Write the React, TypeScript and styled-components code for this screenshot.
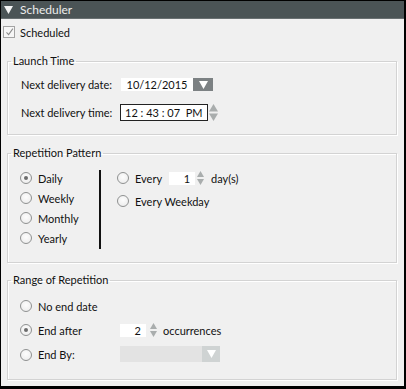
import { styled, createGlobalStyle } from "styled-components";

const GlobalStyle = createGlobalStyle`
    body {
        margin: 0;
        background: #000;
    }
`

const Radio = ({ checked }: { checked?: boolean }) => (
    <RadioCircle>{checked && <RadioDot />}</RadioCircle>
);

const Spinner = ({ size }: { size: "sm" | "lg" }) => {
    const w = size === "lg" ? 9 : 7;
    const h = size === "lg" ? 17 : 14;
    return (
        <svg width={w} height={h} viewBox={`0 0 ${w} ${h}`}>
            <polygon points={`0,${h / 2 - 1} ${w / 2},0 ${w},${h / 2 - 1}`} fill="#a9adad" />
            <polygon points={`0,${h / 2 + 1} ${w / 2},${h} ${w},${h / 2 + 1}`} fill="#a9adad" />
        </svg>
    );
};

const DownArrow = ({ color }: { color: string }) => (
    <svg width="9" height="8" viewBox="0 0 9 8">
        <polygon points="0,0 9,0 4.5,8" fill={color} />
    </svg>
);

export default function App() {
    return (
        <>
            <GlobalStyle />
            <Frame>
                <Header>
                    <DownArrow color="#f4f4f4" />
                    <HeaderTitle>Scheduler</HeaderTitle>
                </Header>
                <Body>
                    <CheckRow>
                        <CheckBox>
                            <svg width="12" height="12" viewBox="0 0 12 12">
                                <path d="M2 6.5 L4.8 9.5 L10.5 1.5" stroke="#8c8c8c" strokeWidth="1.4" fill="none" />
                            </svg>
                        </CheckBox>
                        <Label>Scheduled</Label>
                    </CheckRow>

                    <Group>
                        <Legend>Launch Time</Legend>
                        <LaunchGrid>
                            <Label>Next delivery date:</Label>
                            <DateField>
                                <DateText>10/12/2015</DateText>
                                <DropButton $disabled={false}>
                                    <DownArrow color="#fff" />
                                </DropButton>
                            </DateField>
                            <Label>Next delivery time:</Label>
                            <Inline $gap={1}>
                                <TimeBox>12 : 43 : 07&nbsp;&nbsp;PM</TimeBox>
                                <Spinner size="lg" />
                            </Inline>
                        </LaunchGrid>
                    </Group>

                    <Group $mt={11}>
                        <Legend>Repetition Pattern</Legend>
                        <PatternBody>
                            <PatternList>
                                {["Daily", "Weekly", "Monthly", "Yearly"].map((t, i) => (
                                    <OptionRow key={t} $h={20}>
                                        <Radio checked={i === 0} />
                                        <Label>{t}</Label>
                                    </OptionRow>
                                ))}
                            </PatternList>
                            <Divider />
                            <PatternDetail>
                                <OptionRow $h={20}>
                                    <Radio />
                                    <Label>Every</Label>
                                    <Inline $gap={2} $ml={1}>
                                        <NumBox>1</NumBox>
                                        <Spinner size="sm" />
                                    </Inline>
                                    <Label $ml={1}>day(s)</Label>
                                </OptionRow>
                                <OptionRow $h={20}>
                                    <Radio />
                                    <Label>Every Weekday</Label>
                                </OptionRow>
                            </PatternDetail>
                        </PatternBody>
                    </Group>

                    <Group $mt={10}>
                        <Legend>Range of Repetition</Legend>
                        <RangeGrid>
                            <OptionRow $h={24}>
                                <Radio />
                                <Label>No end date</Label>
                            </OptionRow>
                            <span />
                            <OptionRow $h={24}>
                                <Radio checked />
                                <Label>End after</Label>
                            </OptionRow>
                            <Inline $gap={4}>
                                <NumBox>2</NumBox>
                                <Spinner size="sm" />
                                <Label $ml={2}>occurrences</Label>
                            </Inline>
                            <OptionRow $h={24}>
                                <Radio />
                                <Label>End By:</Label>
                            </OptionRow>
                            <DisabledSelect>
                                <DropButton $disabled>
                                    <DownArrow color="#fff" />
                                </DropButton>
                            </DisabledSelect>
                        </RangeGrid>
                    </Group>
                </Body>
            </Frame>
        </>
    );
}

const Frame = styled.div`
    width: 406px;
    height: 389px;
    box-sizing: border-box;
    border-top: 1px solid #000;
    border-left: 1px solid #000;
    border-right: 2px solid #000;
    border-bottom: 3px solid #000;
    background: #f0f0f0;
    display: flex;
    flex-direction: column;
    font-family: "Lato", "Open Sans", sans-serif;
    font-size: 11px;
    color: #111;
    overflow: hidden;
`

const Header = styled.div`
    height: 17px;
    background: #4b5456;
    border-bottom: 1px solid #697072;
    display: flex;
    align-items: center;
    gap: 7px;
    padding-left: 3px;
`

const HeaderTitle = styled.span`
    color: #ececec;
    font-size: 12px;
`

const Body = styled.div`
    display: flex;
    flex-direction: column;
    padding: 0 7px 0 6px;
`

const CheckRow = styled.div`
    display: flex;
    align-items: center;
    gap: 5px;
    height: 14px;
    margin: 6px 0 15px -4px;
`

const CheckBox = styled.div`
    width: 12px;
    height: 12px;
    box-sizing: border-box;
    border: 1px solid #a3a3a3;
    background: #f6f6f6;
    display: flex;
    align-items: center;
    justify-content: center;

    svg {
        margin-left: 1px;
    }
`

const Label = styled.span<{ $ml?: number }>`
    white-space: nowrap;
    margin-left: ${p => p.$ml ?? 0}px;
`

const Group = styled.fieldset<{ $mt?: number }>`
    margin: ${p => p.$mt ?? 0}px 0 0 0;
    padding: 0;
    border: 1px solid #d3d3d3;
    box-shadow: inset 1px 1px 0 #fff, 1px 1px 0 #fff;
    min-width: 0;
`

const Legend = styled.legend`
    margin-left: 3px;
    padding: 0 2px;
    line-height: 14px;
    color: #111;
`

const LaunchGrid = styled.div`
    display: grid;
    grid-template-columns: 99px auto;
    grid-auto-rows: 17px;
    row-gap: 11px;
    align-items: center;
    justify-items: start;
    padding: 8px 0 13px 13px;
`

const DateField = styled.div`
    display: flex;
    height: 13px;
    margin-left: 1px;
`

const DateText = styled.div`
    width: 72px;
    background: #fff;
    text-align: center;
    line-height: 13px;
`

const DropButton = styled.div<{ $disabled: boolean }>`
    width: ${p => (p.$disabled ? 18 : 20)}px;
    height: 100%;
    background: ${p => (p.$disabled ? "#cfd3d3" : "#7c8183")};
    display: flex;
    align-items: center;
    justify-content: center;
`

const Inline = styled.div<{ $gap: number; $ml?: number }>`
    display: flex;
    align-items: center;
    gap: ${p => p.$gap}px;
    margin-left: ${p => p.$ml ?? 0}px;
`

const TimeBox = styled.div`
    width: 88px;
    height: 17px;
    box-sizing: border-box;
    border: 1px solid #222;
    background: #fff;
    line-height: 15px;
    padding-left: 4px;
    white-space: nowrap;
`

const PatternBody = styled.div`
    display: flex;
    padding: 8px 0 14px 12px;
`

const PatternList = styled.div`
    display: flex;
    flex-direction: column;
    width: 79px;
`

const Divider = styled.div`
    width: 2px;
    background: #111;
    margin: 2px 0 -1px;
`

const PatternDetail = styled.div`
    display: flex;
    flex-direction: column;
    gap: 3px;
    padding-left: 16px;
`

const OptionRow = styled.div<{ $h: number }>`
    display: flex;
    align-items: center;
    gap: 6px;
    height: ${p => p.$h}px;
`

const RadioCircle = styled.span`
    width: 12px;
    height: 12px;
    box-sizing: border-box;
    border-radius: 50%;
    border: 1px solid #8f9191;
    background: radial-gradient(circle at 50% 40%, #fdfdfd, #e9e9e9);
    display: flex;
    align-items: center;
    justify-content: center;
    flex-shrink: 0;
`

const RadioDot = styled.span`
    width: 4px;
    height: 4px;
    border-radius: 50%;
    background: #6c6c6c;
`

const NumBox = styled.div`
    width: 26px;
    height: 13px;
    background: #fff;
    text-align: right;
    padding-right: 5px;
    box-sizing: border-box;
    line-height: 13px;
`

const RangeGrid = styled.div`
    display: grid;
    grid-template-columns: 100px auto;
    grid-template-rows: 24px 24px 25px;
    align-items: center;
    justify-items: start;
    padding: 7px 0 12px 12px;
`

const DisabledSelect = styled.div`
    width: 100px;
    height: 16px;
    background: #e3e3e3;
    display: flex;
    justify-content: flex-end;
    align-self: start;
    margin-top: 4px;
`
